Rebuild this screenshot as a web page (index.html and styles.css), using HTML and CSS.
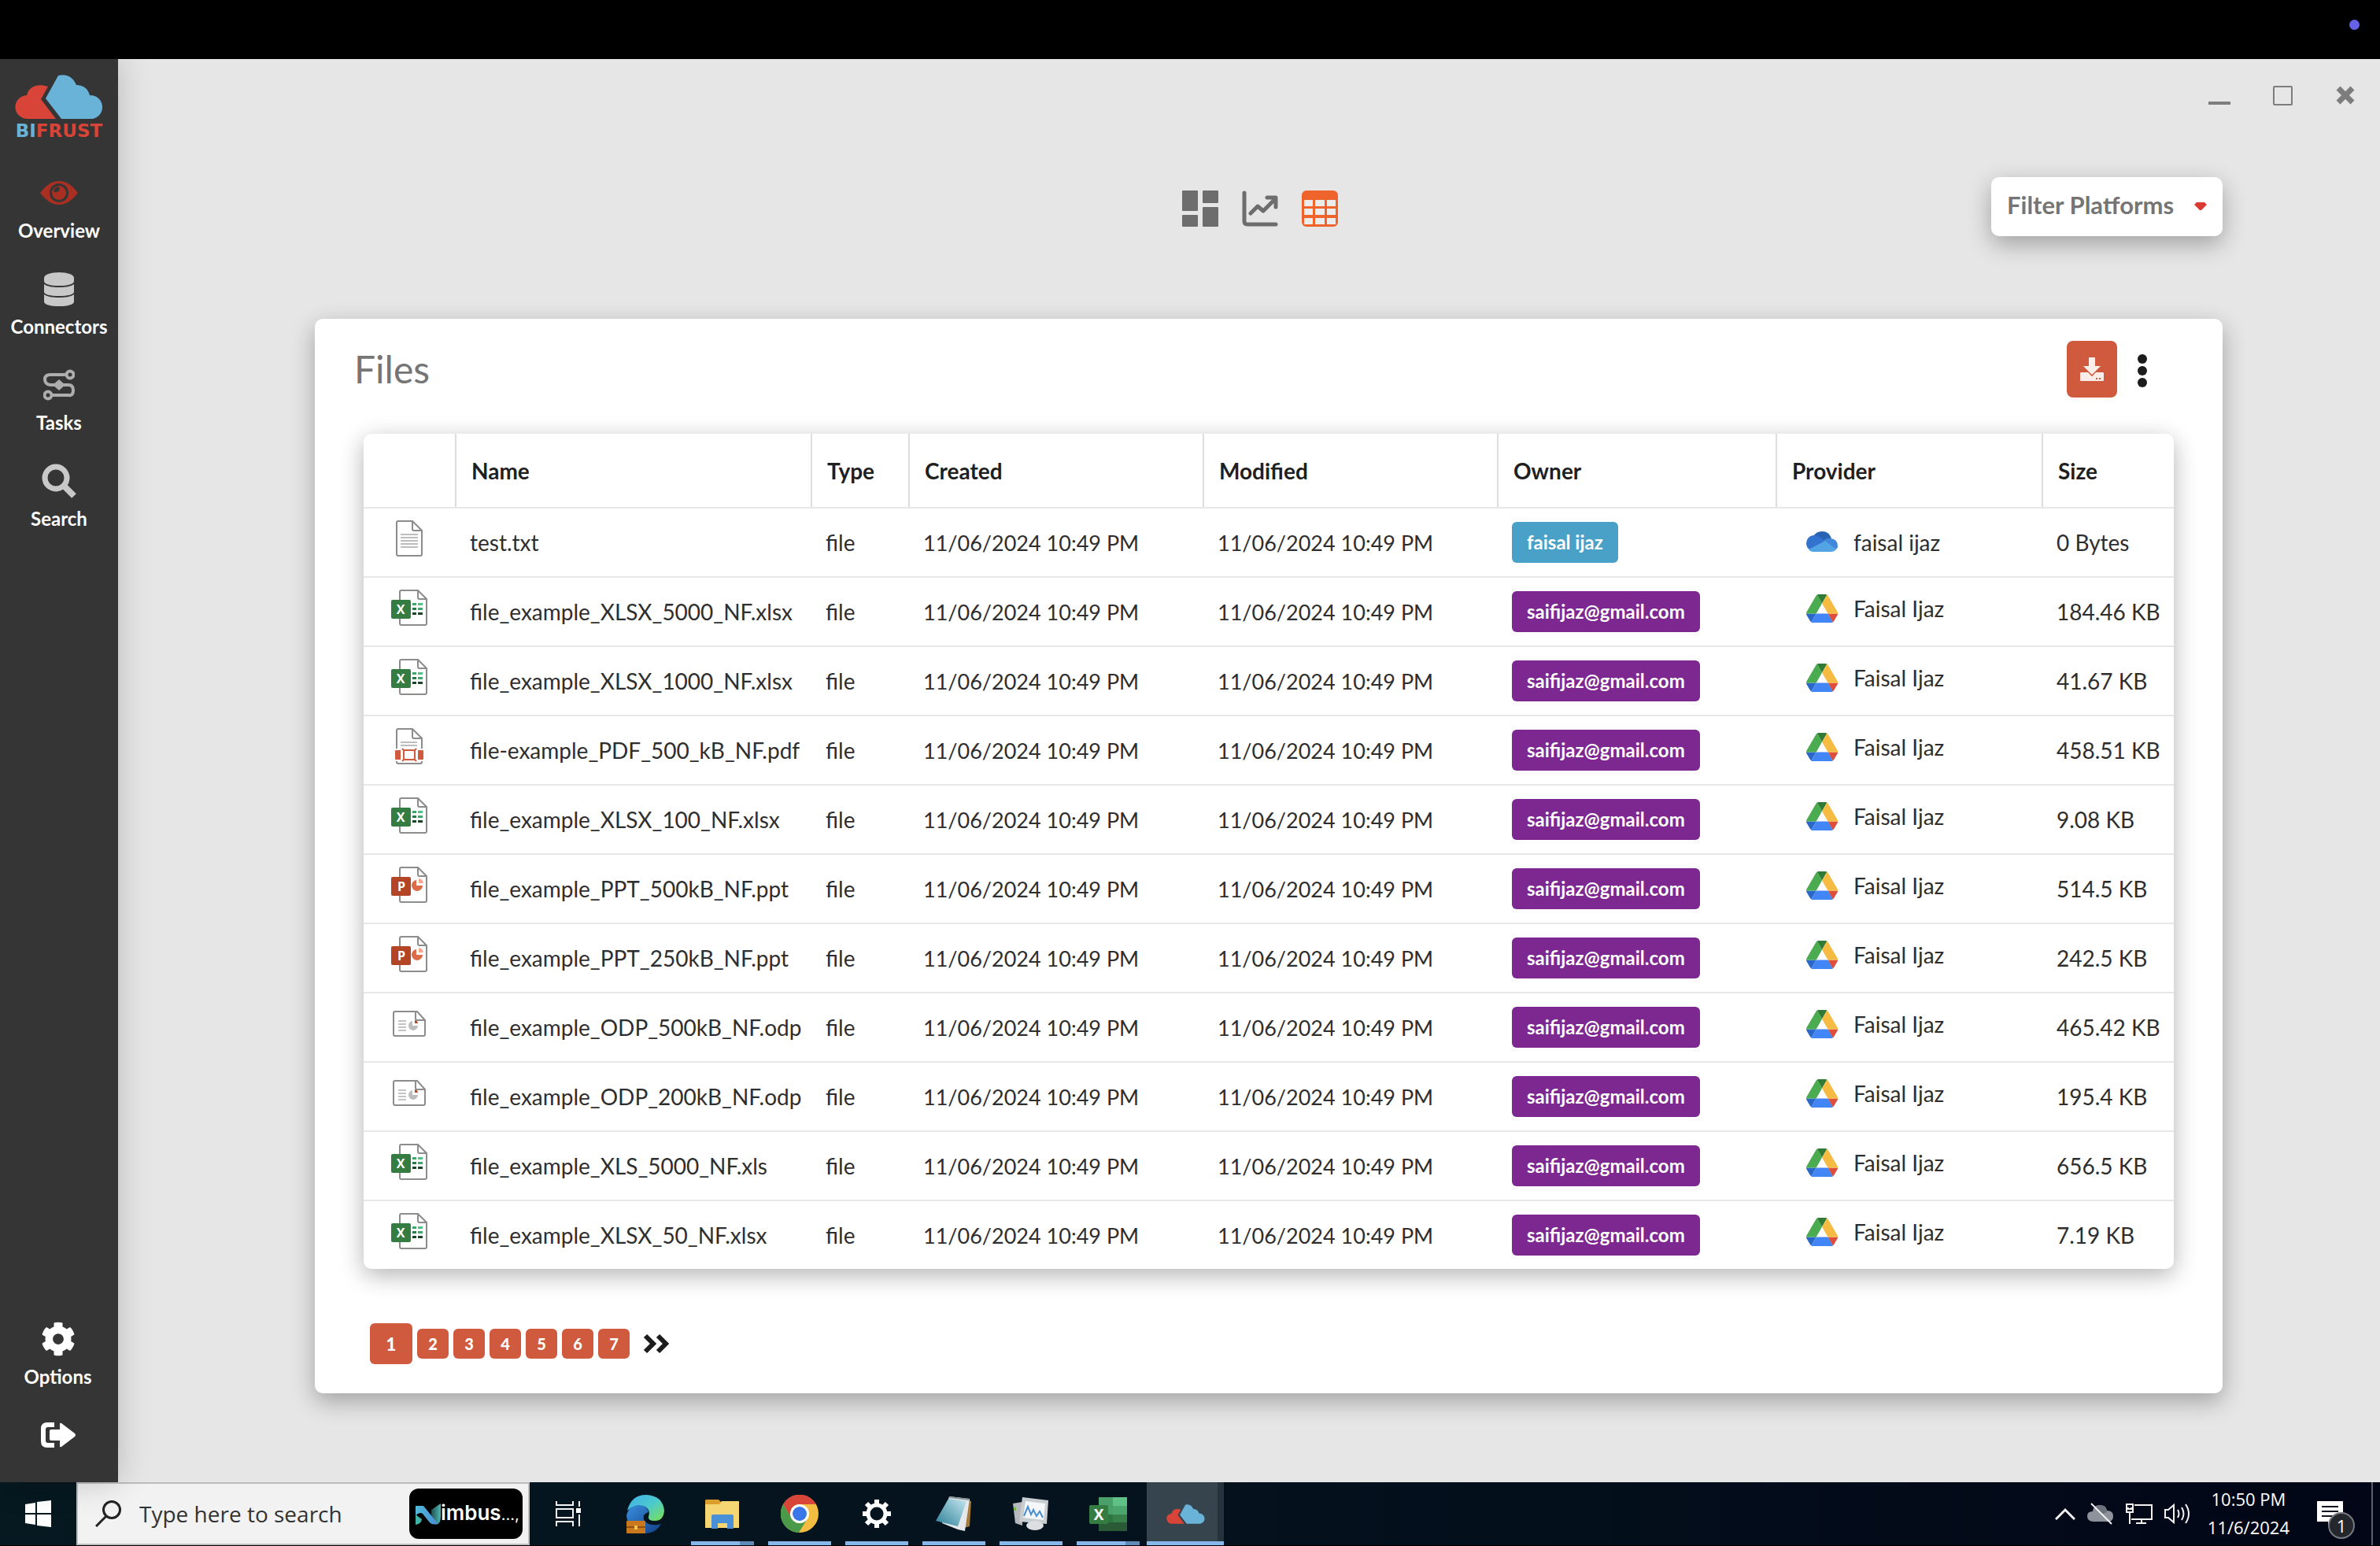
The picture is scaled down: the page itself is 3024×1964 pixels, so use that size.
FILE: index.html
```html
<!DOCTYPE html>
<html lang="en">
<head>
<meta charset="utf-8">
<title>Bifrust - Files</title>
<meta name="viewport" content="width=device-width, initial-scale=1">
<link rel="stylesheet" href="styles.css">
</head>
<body>
<svg class="sprite" aria-hidden="true">
  <symbol id="cloud-logo" viewBox="0 0 112 56">
    <path fill="#d94438" d="M42 15L33 31L52 56H17A15.500 15 0 0 1 15 26C18 14 30 11 42 15Z"/>
    <path fill="#69b2d8" d="M55 1C66 -2 74 3 78 13C87 13 93 18 95 26A15 15 0 0 1 97 56H59L39 30Z"/>
  </symbol>
  <symbol id="gear" viewBox="0 0 512 512">
    <path fill="currentColor" d="M487.4 315.7l-42.6-24.6c4.3-23.2 4.3-47 0-70.2l42.6-24.6c4.9-2.8 7.1-8.6 5.5-14-11.1-35.6-30-67.8-54.700-94.600-3.8-4.1-10-5.1-14.8-2.300L380.800 110c-17.900-15.400-38.500-27.300-60.800-35.100V25.800c0-5.600-3.900-10.500-9.400-11.700-36.700-8.200-74.300-7.800-109.200 0-5.500 1.200-9.400 6.100-9.400 11.700V75c-22.200 7.900-42.800 19.800-60.800 35.100L88.700 85.500c-4.900-2.800-11-1.900-14.800 2.300-24.700 26.700-43.600 58.900-54.700 94.600-1.700 5.400.6 11.200 5.500 14L67.300 221c-4.300 23.200-4.300 47 0 70.200l-42.600 24.600c-4.900 2.800-7.100 8.600-5.500 14 11.100 35.600 30 67.800 54.700 94.600 3.800 4.100 10 5.100 14.800 2.300l42.600-24.600c17.900 15.400 38.500 27.300 60.800 35.100v49.200c0 5.600 3.900 10.500 9.400 11.700 36.700 8.200 74.300 7.800 109.200 0 5.500-1.200 9.400-6.100 9.400-11.700v-49.200c22.200-7.900 42.800-19.800 60.800-35.100l42.600 24.600c4.900 2.800 11 1.900 14.800-2.300 24.700-26.700 43.600-58.900 54.700-94.600 1.500-5.500-.7-11.300-5.600-14.100zM256 336c-44.100 0-80-35.900-80-80s35.900-80 80-80 80 35.900 80 80-35.900 80-80 80z"/>
  </symbol>
  <symbol id="file-txt" viewBox="0 0 46 46">
    <g fill="none" stroke="#8c8c8c" stroke-width="2"><path fill="#fff" d="M9 1H27L39 13V43Q39 45 37 45H9Q7 45 7 43V3Q7 1 9 1Z"/><path d="M27 1V11Q27 13 29 13H39"/></g>
    <path stroke="#bdbdbd" stroke-width="2" d="M12 18H34M12 22H34M12 26H34M12 30H34M12 34H34"/>
  </symbol>
  <symbol id="file-xls" viewBox="0 0 46 46">
    <g fill="none" stroke="#8c8c8c" stroke-width="2"><path fill="#fff" d="M13 1H34L45 12V43Q45 45 43 45H13Q11 45 11 43V3Q11 1 13 1Z"/><path d="M34 1V10Q34 12 36 12H45"/></g>
    <path fill="#3fa768" d="M27 17h5v3h-5z"/><path fill="#4fc483" d="M34 17h6v3h-6z"/>
    <path fill="#2b7a46" d="M27 23h5v3h-5z"/><path fill="#3fa768" d="M34 23h6v3h-6z"/>
    <path fill="#1b4429" d="M27 29h5v3h-5zM34 29h6v3h-6z"/>
    <rect y="13" width="25" height="24" rx="2" fill="#357c42"/>
    <text x="12" y="31" text-anchor="middle" font-family="Open Sans, sans-serif" font-weight="700" font-size="16" fill="#fff">X</text>
  </symbol>
  <symbol id="file-ppt" viewBox="0 0 46 46">
    <g fill="none" stroke="#8c8c8c" stroke-width="2"><path fill="#fff" d="M13 1H34L45 12V43Q45 45 43 45H13Q11 45 11 43V3Q11 1 13 1Z"/><path d="M34 1V10Q34 12 36 12H45"/></g>
    <path fill="#dc6b48" d="M32 17V24H40A7 7 0 1 1 32 17Z"/><path fill="#f6a98c" d="M35 15A7 7 0 0 1 41 21H35Z"/>
    <rect y="13" width="25" height="24" rx="2" fill="#b44426"/>
    <text x="13" y="31" text-anchor="middle" font-family="Open Sans, sans-serif" font-weight="700" font-size="16" fill="#fff">P</text>
  </symbol>
  <symbol id="file-pdf" viewBox="0 0 46 46">
    <g fill="none" stroke="#8c8c8c" stroke-width="2"><path fill="#fff" d="M9 1H27L39 13V43Q39 45 37 45H9Q7 45 7 43V3Q7 1 9 1Z"/><path d="M27 1V11Q27 13 29 13H39"/></g>
    <path stroke="#bdbdbd" stroke-width="2" d="M12 18H33M12 22H33"/>
    <path fill="#fff" d="M4 26h38v16H4z"/>
    <path fill="#cf5a3e" d="M6 28h6v12H6q-1 0-1-1v-10q0-1 1-1zM34 28h6q1 0 1 1v10q0 1-1 1h-6z"/>
    <rect x="16" y="28" width="14" height="12" rx="2" fill="#fff" stroke="#cf5a3e" stroke-width="2"/>
    <path stroke="#cf5a3e" stroke-width="2" d="M14 26l3 3M32 26l-3 3M14 42l3-3M32 42l-3-3"/>
  </symbol>
  <symbol id="file-odp" viewBox="0 0 46 46">
    <g fill="none" stroke="#8c8c8c" stroke-width="2"><path fill="#fff" d="M5 8H33L43 19V37Q43 39 41 39H5Q3 39 3 37V10Q3 8 5 8Z"/><path d="M31 8V17Q31 19 33 19H43"/></g>
    <path stroke="#c4c4c4" stroke-width="2" d="M9 20H19M9 24H19M9 28H19M9 32H19"/>
    <path fill="#bdbdbd" d="M27 20V26H34A6 6 0 1 1 27 20Z"/><path fill="#b44426" d="M30 19A5 5 0 0 1 34 23H30Z"/>
  </symbol>
  <symbol id="gdrive" viewBox="0 0 87 78">
    <path fill="#2b66c9" d="m6.600 66.850 3.850 6.650c.8 1.400 1.950 2.500 3.300 3.300l13.750-23.800h-27.500c0 1.550.4 3.100 1.200 4.500z"/>
    <path fill="#4bab50" d="m43.650 25-13.750-23.800c-1.350.8-2.500 1.900-3.300 3.300l-25.400 44a9 9 0 0 0 -1.200 4.500h27.500z"/>
    <path fill="#dd4f3c" d="m73.550 76.800c1.350-.8 2.500-1.900 3.300-3.300l9.250-16c.8-1.400 1.200-2.950 1.200-4.500h-27.500l5.850 11.500z"/>
    <path fill="#2f7a35" d="m43.650 25 13.750-23.800c-1.350-.8-2.900-1.200-4.500-1.200h-18.500c-1.600 0-3.150.45-4.500 1.200z"/>
    <path fill="#4285f4" d="m59.800 53h-32.300l-13.750 23.800c1.350.8 2.900 1.200 4.500 1.200h50.800c1.600 0 3.150-.45 4.500-1.200z"/>
    <path fill="#f6bb42" d="m73.400 26.500-12.700-22c-.8-1.400-1.950-2.500-3.300-3.300l-13.750 23.800 16.150 28h27.450c0-1.550-.4-3.100-1.200-4.500z"/>
  </symbol>
  <symbol id="onedrive" viewBox="0 0 40 36">
    <path fill="#2a62b4" d="M9 10Q13 4 20 4Q29 4 32 13L24 21L9 12Z"/>
    <path fill="#3273cf" d="M9 9Q14 9 18 12L26 17L4 27Q0 24 0 19Q1 10 9 9Z"/>
    <path fill="#4188d8" d="M23 15Q27 12 31 13Q40 14 40 23Q40 25 38 27L22 17Z"/>
    <path fill="#52a4e4" d="M24 16L38 27Q36 30 31 30H9Q5 30 3 27Z"/>
  </symbol>
</svg>

<div class="screen-top"><span class="camera-dot"></span></div>

<div class="app">
  <aside class="sidebar">
    <a class="logo" href="#" aria-label="Bifrust home">
      <svg width="112" height="56"><use href="#cloud-logo"/></svg>
      <span class="logo-name"><span class="logo-bi">BI</span>FRUST</span>
    </a>
    <nav class="nav">
      <a class="nav-item active" href="#">
        <span class="nav-icon"><svg width="48" height="30" viewBox="0 0 48 30"><path fill="#a92f23" d="M0 15Q11 0 24 0T48 15Q37 30 24 30T0 15Z"/><circle cx="24" cy="15" r="12" fill="#353535"/><circle cx="24" cy="15" r="9" fill="#a92f23"/><path fill="#353535" d="M17 13A8 8 0 0 1 23 7Q26 9 24 12Q21 16 17 13Z"/></svg></span>
        Overview
      </a>
      <a class="nav-item" href="#">
        <span class="nav-icon"><svg width="38" height="43" viewBox="0 0 38 43" fill="currentColor"><path d="M0 7C0 3 8 0 19 0S38 3 38 7V11C38 15 30 17 19 17S0 15 0 11Z"/><path d="M0 15C4 18 11 19 19 19S34 18 38 15V25C38 28 30 30 19 30S0 28 0 25Z"/><path d="M0 28C4 31 11 32 19 32S34 31 38 28V37C38 41 30 43 19 43S0 41 0 37Z"/></svg></span>
        Connectors
      </a>
      <a class="nav-item" href="#">
        <span class="nav-icon"><svg width="40" height="40" viewBox="0 0 40 40" fill="none" stroke="#adadad" stroke-width="4"><circle cx="34" cy="7" r="4.500"/><circle cx="6" cy="33" r="4.500"/><path d="M29 7H9Q2 7 2 13T9 20H32Q38 20 38 27T32 33H11"/><path fill="#adadad" stroke="none" d="M12 20L20 13L28 20L20 27Z"/></svg></span>
        Tasks
      </a>
      <a class="nav-item" href="#">
        <span class="nav-icon"><svg width="44" height="44" viewBox="0 0 44 44" fill="none" stroke="currentColor"><circle cx="18" cy="18" r="14" stroke-width="7"/><path stroke-width="8" d="M28 28L41 41"/></svg></span>
        Search
      </a>
    </nav>
    <div class="nav nav-bottom">
      <a class="nav-item" href="#">
        <span class="nav-icon"><svg width="44" height="44"><use href="#gear"/></svg></span>
        Options
      </a>
      <a class="nav-item" href="#" aria-label="Log out">
        <span class="nav-icon"><svg width="44" height="32" viewBox="0 0 44 32" fill="currentColor"><path d="M17 0H8Q0 0 0 8V24Q0 32 8 32H17V26H9Q6 26 6 23V9Q6 6 9 6H17Z"/><path d="M11 11Q11 9 13 9H24V2Q24 0 26 1L43 14Q45 16 43 18L26 31Q24 32 24 30V23H13Q11 23 11 21Z"/></svg></span>
      </a>
    </div>
  </aside>

  <main class="main">
    <div class="window-controls">
      <button type="button" aria-label="Minimize"><svg width="28" height="24"><path fill="#7d7d7d" d="M0 20h28v4H0z"/></svg></button>
      <button type="button" aria-label="Maximize"><svg width="25" height="25"><rect x="1" y="1" width="23" height="23" rx="1" fill="none" stroke="#7d7d7d" stroke-width="2"/></svg></button>
      <button type="button" aria-label="Close"><svg width="24" height="24"><path stroke="#7d7d7d" stroke-width="7" d="M3 3L21 21M21 3L3 21"/></svg></button>
    </div>

    <div class="toolbar">
      <div class="views">
        <button type="button" aria-label="Dashboard view"><svg width="46" height="46" fill="#6d6d6d"><rect width="20" height="26" rx="1"/><rect x="26" width="20" height="16" rx="1"/><rect y="31" width="20" height="15" rx="1"/><rect x="26" y="21" width="20" height="25" rx="1"/></svg></button>
        <button type="button" aria-label="Chart view"><svg width="46" height="46" fill="none" stroke="#6d6d6d" stroke-width="5" stroke-linecap="round"><path d="M3 3V39Q3 43 7 43H43"/><path stroke-linejoin="round" d="M11 29L20 20L27 26L42 11M32 9H43V21"/></svg></button>
        <button type="button" aria-label="Table view"><svg width="46" height="46"><rect width="46" height="46" rx="6" fill="#ee642b"/><path fill="#ececec" d="M3 12h11v8H3zM17 12h12v8H17zM32 12h11v8H32zM3 23h11v8H3zM17 23h12v8H17zM32 23h11v8H32zM3 35h11v8H3zM17 35h12v8H17zM32 35h11v8H32z"/></svg></button>
      </div>
      <div class="filter">
        <select aria-label="Filter platforms"><option>Filter Platforms</option></select>
        <svg class="filter-arrow" width="16" height="10" viewBox="0 0 16 10"><path fill="#d93a32" d="M3 0H13L16 3L9 10H7L0 3Z"/></svg>
      </div>
    </div>

    <section class="card">
      <header class="card-head">
        <h1>Files</h1>
        <button type="button" class="download" aria-label="Download"><svg width="30" height="30" viewBox="0 0 30 30" fill="#fbeeea"><path d="M11 0H19V11H26L15 22L4 11H11Z"/><path d="M1 19H10L15 24L20 19H29Q30 19 30 20V29Q30 30 29 30H1Q0 30 0 29V20Q0 19 1 19Z"/><path fill="#cf5a3e" d="M20 26h2v2h-2zM24 26h2v2h-2zM12 20l3 3 3-3v1l-3 3-3-3z"/></svg></button>
        <button type="button" class="more" aria-label="More"><svg width="12" height="42" fill="#1c1c1c"><circle cx="6" cy="6" r="6"/><circle cx="6" cy="21" r="6"/><circle cx="6" cy="36" r="6"/></svg></button>
      </header>

      <div class="table-box">
        <table>
          <colgroup><col class="c-icon"><col class="c-name"><col class="c-type"><col class="c-date"><col class="c-date"><col class="c-owner"><col class="c-provider"><col class="c-size"></colgroup>
          <thead>
            <tr><th aria-label="Icon"></th><th>Name</th><th>Type</th><th>Created</th><th>Modified</th><th>Owner</th><th>Provider</th><th>Size</th></tr>
          </thead>
          <tbody>
            <tr><td><svg class="file-icon"><use href="#file-txt"/></svg></td><td>test.txt</td><td>file</td><td class="date">11/06/2024 10:49 PM</td><td class="date">11/06/2024 10:49 PM</td><td><span class="badge blue">faisal ijaz</span></td><td><span class="provider"><svg><use href="#onedrive"/></svg>faisal ijaz</span></td><td>0 Bytes</td></tr>
            <tr><td><svg class="file-icon"><use href="#file-xls"/></svg></td><td>file_example_XLSX_5000_NF.xlsx</td><td>file</td><td class="date">11/06/2024 10:49 PM</td><td class="date">11/06/2024 10:49 PM</td><td><span class="badge">saifijaz@gmail.com</span></td><td><span class="provider google"><svg><use href="#gdrive"/></svg>Faisal Ijaz</span></td><td>184.46 KB</td></tr>
            <tr><td><svg class="file-icon"><use href="#file-xls"/></svg></td><td>file_example_XLSX_1000_NF.xlsx</td><td>file</td><td class="date">11/06/2024 10:49 PM</td><td class="date">11/06/2024 10:49 PM</td><td><span class="badge">saifijaz@gmail.com</span></td><td><span class="provider google"><svg><use href="#gdrive"/></svg>Faisal Ijaz</span></td><td>41.67 KB</td></tr>
            <tr><td><svg class="file-icon"><use href="#file-pdf"/></svg></td><td>file-example_PDF_500_kB_NF.pdf</td><td>file</td><td class="date">11/06/2024 10:49 PM</td><td class="date">11/06/2024 10:49 PM</td><td><span class="badge">saifijaz@gmail.com</span></td><td><span class="provider google"><svg><use href="#gdrive"/></svg>Faisal Ijaz</span></td><td>458.51 KB</td></tr>
            <tr><td><svg class="file-icon"><use href="#file-xls"/></svg></td><td>file_example_XLSX_100_NF.xlsx</td><td>file</td><td class="date">11/06/2024 10:49 PM</td><td class="date">11/06/2024 10:49 PM</td><td><span class="badge">saifijaz@gmail.com</span></td><td><span class="provider google"><svg><use href="#gdrive"/></svg>Faisal Ijaz</span></td><td>9.08 KB</td></tr>
            <tr><td><svg class="file-icon"><use href="#file-ppt"/></svg></td><td>file_example_PPT_500kB_NF.ppt</td><td>file</td><td class="date">11/06/2024 10:49 PM</td><td class="date">11/06/2024 10:49 PM</td><td><span class="badge">saifijaz@gmail.com</span></td><td><span class="provider google"><svg><use href="#gdrive"/></svg>Faisal Ijaz</span></td><td>514.5 KB</td></tr>
            <tr><td><svg class="file-icon"><use href="#file-ppt"/></svg></td><td>file_example_PPT_250kB_NF.ppt</td><td>file</td><td class="date">11/06/2024 10:49 PM</td><td class="date">11/06/2024 10:49 PM</td><td><span class="badge">saifijaz@gmail.com</span></td><td><span class="provider google"><svg><use href="#gdrive"/></svg>Faisal Ijaz</span></td><td>242.5 KB</td></tr>
            <tr><td><svg class="file-icon"><use href="#file-odp"/></svg></td><td>file_example_ODP_500kB_NF.odp</td><td>file</td><td class="date">11/06/2024 10:49 PM</td><td class="date">11/06/2024 10:49 PM</td><td><span class="badge">saifijaz@gmail.com</span></td><td><span class="provider google"><svg><use href="#gdrive"/></svg>Faisal Ijaz</span></td><td>465.42 KB</td></tr>
            <tr><td><svg class="file-icon"><use href="#file-odp"/></svg></td><td>file_example_ODP_200kB_NF.odp</td><td>file</td><td class="date">11/06/2024 10:49 PM</td><td class="date">11/06/2024 10:49 PM</td><td><span class="badge">saifijaz@gmail.com</span></td><td><span class="provider google"><svg><use href="#gdrive"/></svg>Faisal Ijaz</span></td><td>195.4 KB</td></tr>
            <tr><td><svg class="file-icon"><use href="#file-xls"/></svg></td><td>file_example_XLS_5000_NF.xls</td><td>file</td><td class="date">11/06/2024 10:49 PM</td><td class="date">11/06/2024 10:49 PM</td><td><span class="badge">saifijaz@gmail.com</span></td><td><span class="provider google"><svg><use href="#gdrive"/></svg>Faisal Ijaz</span></td><td>656.5 KB</td></tr>
            <tr><td><svg class="file-icon"><use href="#file-xls"/></svg></td><td>file_example_XLSX_50_NF.xlsx</td><td>file</td><td class="date">11/06/2024 10:49 PM</td><td class="date">11/06/2024 10:49 PM</td><td><span class="badge">saifijaz@gmail.com</span></td><td><span class="provider google"><svg><use href="#gdrive"/></svg>Faisal Ijaz</span></td><td>7.19 KB</td></tr>
          </tbody>
        </table>
      </div>

      <nav class="pages" aria-label="Pages">
        <button type="button" class="current">1</button>
        <button type="button">2</button>
        <button type="button">3</button>
        <button type="button">4</button>
        <button type="button">5</button>
        <button type="button">6</button>
        <button type="button">7</button>
        <button type="button" class="next" aria-label="Next pages"><svg width="34" height="26" viewBox="0 0 34 26" fill="none" stroke="#1c1c1c" stroke-width="6"><path d="M3 3L13 13L3 23M19 3L29 13L19 23"/></svg></button>
      </nav>
    </section>
  </main>
</div>

<footer class="taskbar">
  <button type="button" class="start" aria-label="Start"><svg width="33" height="34" viewBox="0 0 33 34" fill="#fff"><path d="M0 5L13 3V16H0ZM15 2L33 0V16H15ZM0 18H13V31L0 29ZM15 18H33V34L15 32Z"/></svg></button>
  <label class="search">
    <svg width="34" height="34" viewBox="0 0 34 34" fill="none" stroke="#222" stroke-width="3"><circle cx="21" cy="12" r="10.500"/><path d="M14 20L1 33"/></svg>
    <input type="text" placeholder="Type here to search" aria-label="Search Windows">
    <span class="nimbus">
      <svg width="32" height="27" viewBox="0 0 32 27"><defs><linearGradient id="n-left"><stop offset="0" stop-color="#4fb9d8"/><stop offset="1" stop-color="#4a8ed6"/></linearGradient><linearGradient id="n-right"><stop offset="0" stop-color="#21504f"/><stop offset="1" stop-color="#4fb8b4"/></linearGradient></defs><path fill="url(#n-right)" d="M20 8L32 0V16Q32 26 26 27L20 20Z"/><path fill="#3fb3a8" d="M0 14L8 20Q7 26 0 27Z"/><path fill="url(#n-left)" d="M0 3H10L28 25Q22 29 17 23L9 13Q6 10 0 15Z"/></svg>
      <span>imbus<small>...,</small></span>
    </span>
  </label>
  <div class="tasks">
    <button type="button" aria-label="Task view"><svg width="32" height="32" viewBox="0 0 32 32" fill="none" stroke="#f2f2f2" stroke-width="2"><path d="M1 0V5H22V0M1 32V26H22V32M1 10H22V21H1ZM30 0V7M30 17V32"/><path fill="#fff" stroke="none" d="M26 9h6v6h-6z"/></svg></button>
    <button type="button" aria-label="Edge"><svg width="48" height="49" viewBox="0 0 48 49"><defs><linearGradient id="edge-top" x1="0" y1="0" x2="1" y2="1"><stop offset="0" stop-color="#3fb0e8"/><stop offset=".5" stop-color="#4cc9cf"/><stop offset="1" stop-color="#7be050"/></linearGradient><linearGradient id="edge-low" x1="0" y1="0" x2="1" y2="1"><stop offset="0" stop-color="#3a8fe0"/><stop offset="1" stop-color="#123f86"/></linearGradient></defs><path fill="url(#edge-low)" d="M0 26Q4 12 16 12Q26 13 28 22Q20 24 22 32Q28 41 44 37Q38 48 25 49Q2 48 0 26Z"/><path fill="url(#edge-top)" d="M1 20Q6 0 25 0Q46 1 48 20Q47 33 36 33Q27 33 28 28Q31 20 24 15Q12 9 1 20Z"/><rect y="33" width="24" height="16" rx="1" fill="#c9781e"/><path fill="#8f4f10" d="M0 40h24v2H0z"/><path fill="#f6c54a" d="M10 39h4v5h-4z"/></svg></button>
    <button type="button" class="open stacked" aria-label="File Explorer"><svg width="44" height="38" viewBox="0 0 44 38"><path fill="#dd9f2c" d="M0 2Q0 1 2 1H17L20 4V10H0Z"/><path fill="#f6d673" d="M0 7H18L21 3H43V37H0Z"/><path fill="#4a90d9" d="M8 22Q8 20 10 20H34Q36 20 36 22V38H28V31H16V38H8Z"/></svg></button>
    <button type="button" class="open" aria-label="Chrome"><svg width="48" height="48" viewBox="0 0 48 48"><circle cx="24" cy="24" r="24" fill="#f3bd42"/><path fill="#d8463a" d="M3 12A24 24 0 0 1 45 12H24A12 12 0 0 0 13 19L12 27Z"/><path fill="#4a9a4a" d="M3 12L14 30Q18 36 24 36L34 30L23 48A24 24 0 0 1 3 12Z"/><circle cx="24" cy="24" r="12" fill="#fff"/><circle cx="24" cy="24" r="9" fill="#3b76e8"/></svg></button>
    <button type="button" class="open" aria-label="Settings"><svg width="38" height="38" viewBox="0 0 38 38" fill="none" stroke="#fff"><circle cx="19" cy="19" r="11" stroke-width="5"/><g stroke-width="6"><path d="M19 1V7M19 31V37M1 19H7M31 19H37M6 6L11 11M27 27L32 32M32 6L27 11M11 27L6 32"/></g></svg></button>
    <button type="button" class="open" aria-label="Notepad"><svg width="46" height="44" viewBox="0 0 46 44"><path fill="#a57a3c" d="M38 4L45 6L43 38L36 40Z"/><path fill="#e4e8ea" d="M17 0L43 3L37 44L28 42L8 34Z"/><defs><linearGradient id="note" x1="0" y1="1" x2="1" y2="0"><stop offset="0" stop-color="#2b7f98"/><stop offset="1" stop-color="#c4e6ee"/></linearGradient></defs><path fill="url(#note)" d="M16 3L39 6L28 38L0 31Z"/><path stroke="#87959a" stroke-width="2" d="M17 1L42 4"/></svg></button>
    <button type="button" class="open" aria-label="Task Manager"><svg width="46" height="42" viewBox="0 0 46 42"><path fill="#b6b9bc" d="M0 8L12 6V36L3 33Z"/><path fill="#78b543" d="M1 13h3v4H1z"/><path fill="#c9cdd0" d="M12 0L45 4L43 34L8 31Z"/><path fill="#f4f7fa" d="M16 5L41 8L39 29L13 26Z"/><path fill="none" stroke="#4a8fd0" stroke-width="2" d="M14 24L19 12L23 22L26 16L30 24L34 18L38 26"/><ellipse cx="28" cy="36" rx="11" ry="6" fill="#dcdfe1"/></svg></button>
    <button type="button" class="open stacked" aria-label="Excel"><svg width="48" height="43" viewBox="0 0 48 43"><path fill="#4ba06a" d="M12 0H30V22H12Z"/><path fill="#5fc186" d="M30 0H48V11H30Z"/><path fill="#4ba56c" d="M30 11H48V22H30Z"/><path fill="#2f7542" d="M12 22H30V32H12Z"/><path fill="#38814a" d="M30 22H48V32H30Z"/><path fill="#2a5a36" d="M12 32H48V43H12Z"/><rect y="10" width="24" height="24" rx="2" fill="#357c42"/><text x="12" y="29" text-anchor="middle" font-family="Open Sans, sans-serif" font-weight="700" font-size="19" fill="#fff">X</text></svg></button>
    <button type="button" class="open focused" aria-label="Bifrust"><svg width="49" height="25"><use href="#cloud-logo"/></svg></button>
  </div>
  <div class="tray">
    <svg width="26" height="16" viewBox="0 0 26 16" fill="none" stroke="#f2f2f2" stroke-width="3"><path d="M1 15L13 3L25 15"/></svg>
    <svg width="34" height="28" viewBox="0 0 34 28"><path fill="#8d929b" d="M7 24Q0 23 0 17T7 11Q8 3 16 3T25 10Q33 10 33 17T27 24Z"/><path fill="#6c727c" d="M10 7Q13 3 17 3Q24 4 25 12L20 14Z"/><path stroke="#f2f2f2" stroke-width="2" d="M5 1L31 27"/></svg>
    <svg width="34" height="28" viewBox="0 0 34 28" fill="none" stroke="#f2f2f2" stroke-width="2"><path d="M11 3H33V21H7M20 21V26M13 26H26M1 2H9V12H1ZM5 12V27M3 6V8H7V6"/></svg>
    <svg width="34" height="28" viewBox="0 0 34 28" fill="none" stroke="#f2f2f2" stroke-width="2"><path d="M1 9H5L12 3V25L5 19H1Z"/><path d="M17 9Q20 14 17 19M22 6Q27 14 22 22M27 2Q35 14 27 26"/></svg>
    <time class="clock"><span>10:50 PM</span><span>11/6/2024</span></time>
    <button type="button" class="notice" aria-label="Notifications"><svg width="33" height="33" viewBox="0 0 33 33"><path fill="#fff" d="M0 0H33V26H21L14 32V26H0Z"/><path stroke="#10141f" stroke-width="2" d="M6 7H27M6 13H27M6 19H20"/></svg><span>1</span></button>
  </div>
</footer>
</body>
</html>
```
FILE: styles.css
```css
* { box-sizing: border-box; }

body {
  margin: 0;
  min-height: 100vh;
  display: flex;
  flex-direction: column;
  background: #000;
  color: #1f1f1f;
  font-family: Lato, "Open Sans", sans-serif;
  font-size: 28px;
}

button {
  display: flex;
  align-items: center;
  justify-content: center;
  margin: 0;
  padding: 0;
  border: 0;
  background: none;
  font: inherit;
  cursor: pointer;
}

svg { display: block; flex: none; }
a { color: inherit; text-decoration: none; }

.sprite { display: none; }

.screen-top {
  height: 75px;
  display: flex;
  justify-content: flex-end;
  padding: 25px 26px;
}
.camera-dot { width: 13px; height: 13px; border-radius: 50%; background: #6562e8; }

.app { flex: 1; display: flex; background: #e6e6e6; }

/* Sidebar */
.sidebar {
  z-index: 1;
  flex: none;
  width: 150px;
  display: flex;
  flex-direction: column;
  align-items: center;
  padding: 20px 0 36px;
  background: #353535;
  color: #fff;
  box-shadow: 0 0 40px rgba(0, 0, 0, 0.2);
}
.logo { display: flex; flex-direction: column; align-items: center; gap: 3px; }
.logo-name {
  font: 700 23px/24px "DejaVu Sans", sans-serif;
  color: #d94438;
}
.logo-bi { color: #69b2d8; }
.nav { display: flex; flex-direction: column; gap: 36px; margin-top: 43px; }
.nav-bottom { margin-top: auto; padding-right: 3px; }
.nav-item {
  display: flex;
  flex-direction: column;
  align-items: center;
  gap: 10px;
  font-size: 24px;
  font-weight: 700;
  line-height: 28px;
}
.nav-icon {
  height: 48px;
  display: flex;
  align-items: center;
  color: #c8c8c8;
}
.nav-bottom .nav-icon { color: #fff; }

/* Main area */
.main { flex: 1; min-width: 0; }
.window-controls { display: flex; justify-content: flex-end; padding-right: 4px; }
.window-controls button { width: 80px; height: 92px; }

.toolbar {
  display: grid;
  grid-template-columns: 1fr auto 1fr;
  align-items: center;
  padding: 58px 200px 0 228px;
}
.views { grid-column: 2; display: flex; gap: 30px; padding-top: 4px; }
.filter { position: relative; justify-self: end; }
.filter select {
  appearance: none;
  display: block;
  width: 294px;
  height: 75px;
  padding: 0 20px 6px;
  border: 0;
  border-radius: 10px;
  background: #fff;
  color: #757575;
  font: 700 31px/40px Lato, sans-serif;
  box-shadow: 0 10px 30px rgba(0, 0, 0, 0.3);
}
.filter-arrow { position: absolute; right: 20px; top: 32px; pointer-events: none; }

.card {
  margin: 105px 200px 112px 250px;
  padding: 28px 0 37px;
  border-radius: 10px;
  background: #fff;
  box-shadow: 0 10px 30px rgba(0, 0, 0, 0.3);
}
.card-head { display: flex; align-items: center; padding: 0 96px 0 50px; }
.card-head h1 {
  flex: 1;
  margin: 0;
  color: #757575;
  font-size: 48px;
  font-weight: 400;
  line-height: 60px;
}
.download {
  width: 64px;
  height: 72px;
  margin-right: 26px;
  border-radius: 8px;
  background: #cf5a3e;
}
.more { padding-top: 4px; }

.table-box {
  margin: 46px 62px 69px;
  border-radius: 10px;
  overflow: hidden;
  box-shadow: 0 8px 30px rgba(0, 0, 0, 0.3);
}
table { width: 100%; border-collapse: separate; border-spacing: 0; table-layout: fixed; }
.c-icon { width: 116px; }
.c-name { width: 452px; }
.c-type { width: 124px; }
.c-date { width: 374px; }
.c-owner { width: 354px; }
.c-provider { width: 338px; }
.c-size { width: 168px; }
th, td { padding: 0 0 0 19px; text-align: left; white-space: nowrap; }
th {
  height: 93px;
  border-left: 2px solid #dedede;
  font-weight: 700;
}
th:first-child { border-left: 0; }
td { height: 88px; border-top: 2px solid #e8e8e8; color: #2e2e2e; }
td:first-child { padding: 0; }
.date { font-size: 27px; }
.file-icon { width: 46px; height: 46px; margin: 0 auto 10px; }

.badge {
  display: inline-block;
  padding: 0 19px;
  border-radius: 6px;
  background: #7d2890;
  color: #fff;
  font-size: 24px;
  font-weight: 700;
  line-height: 52px;
}
.badge.blue { background: #4aa1c7; }

.provider { display: flex; align-items: center; gap: 20px; padding-left: 20px; }
.provider svg { width: 40px; height: 36px; }
.provider.google { padding-bottom: 8px; }

.pages { display: flex; align-items: center; gap: 6px; padding-left: 70px; }
.pages button {
  width: 40px;
  height: 38px;
  border-radius: 6px;
  background: #cf5a3e;
  color: #fff;
  font-size: 20px;
  font-weight: 900;
}
.pages .current { width: 54px; height: 52px; font-size: 22px; }
.pages .next { margin-left: 8px; background: none; }

/* Taskbar */
.taskbar {
  height: 81px;
  display: flex;
  border-bottom: 1px solid #000;
  background: linear-gradient(90deg, #061820, #04121e 50%, #020616);
  color: #fff;
  font-family: "Open Sans", "Noto Sans", sans-serif;
}
.start { width: 97px; }
.search {
  width: 576px;
  display: flex;
  align-items: center;
  padding: 0 7px 0 22px;
  border: 2px solid #bdbdbd;
  background: #f2f2f2;
}
.search input {
  flex: 1;
  min-width: 0;
  padding: 0 0 0 22px;
  border: 0;
  outline: 0;
  background: none;
  color: #333;
  font: 400 28px/40px "Open Sans", sans-serif;
}
.search input::placeholder { color: #333; opacity: 1; }
.nimbus {
  width: 144px;
  height: 64px;
  display: flex;
  align-items: center;
  padding-left: 8px;
  border-radius: 12px;
  background: #000;
  color: #fff;
  font: 600 26px/32px Inter, sans-serif;
}
.nimbus small { font-size: 20px; font-weight: 400; }

.tasks { display: flex; }
.tasks button { width: 98px; position: relative; }
.tasks .open::after {
  content: "";
  position: absolute;
  left: 9px;
  right: 9px;
  bottom: 0;
  height: 5px;
  background: #86b8ec;
}
.tasks .stacked::after { background: linear-gradient(90deg, #86b8ec 62px, #5f8bb8 62px); }
.tasks .focused { background: linear-gradient(90deg, #36444d 90px, #26333d 90px); }
.tasks .focused::after { left: 0; right: 0; }

.tray { display: flex; align-items: center; gap: 15px; margin-left: auto; padding-right: 9px; }
.clock {
  display: flex;
  flex-direction: column;
  align-items: center;
  margin: 0 12px 0 6px;
  padding-bottom: 2px;
  font-size: 22px;
  line-height: 36px;
}
.notice { position: relative; width: 79px; height: 80px; justify-content: flex-start; padding-left: 8px; border-right: 2px solid #5a5f69; }
.notice span {
  position: absolute;
  left: 22px;
  top: 38px;
  width: 34px;
  height: 34px;
  border: 2px solid #76797f;
  border-radius: 50%;
  background: #24272c;
  color: #fff;
  font-size: 22px;
  line-height: 30px;
}
```
